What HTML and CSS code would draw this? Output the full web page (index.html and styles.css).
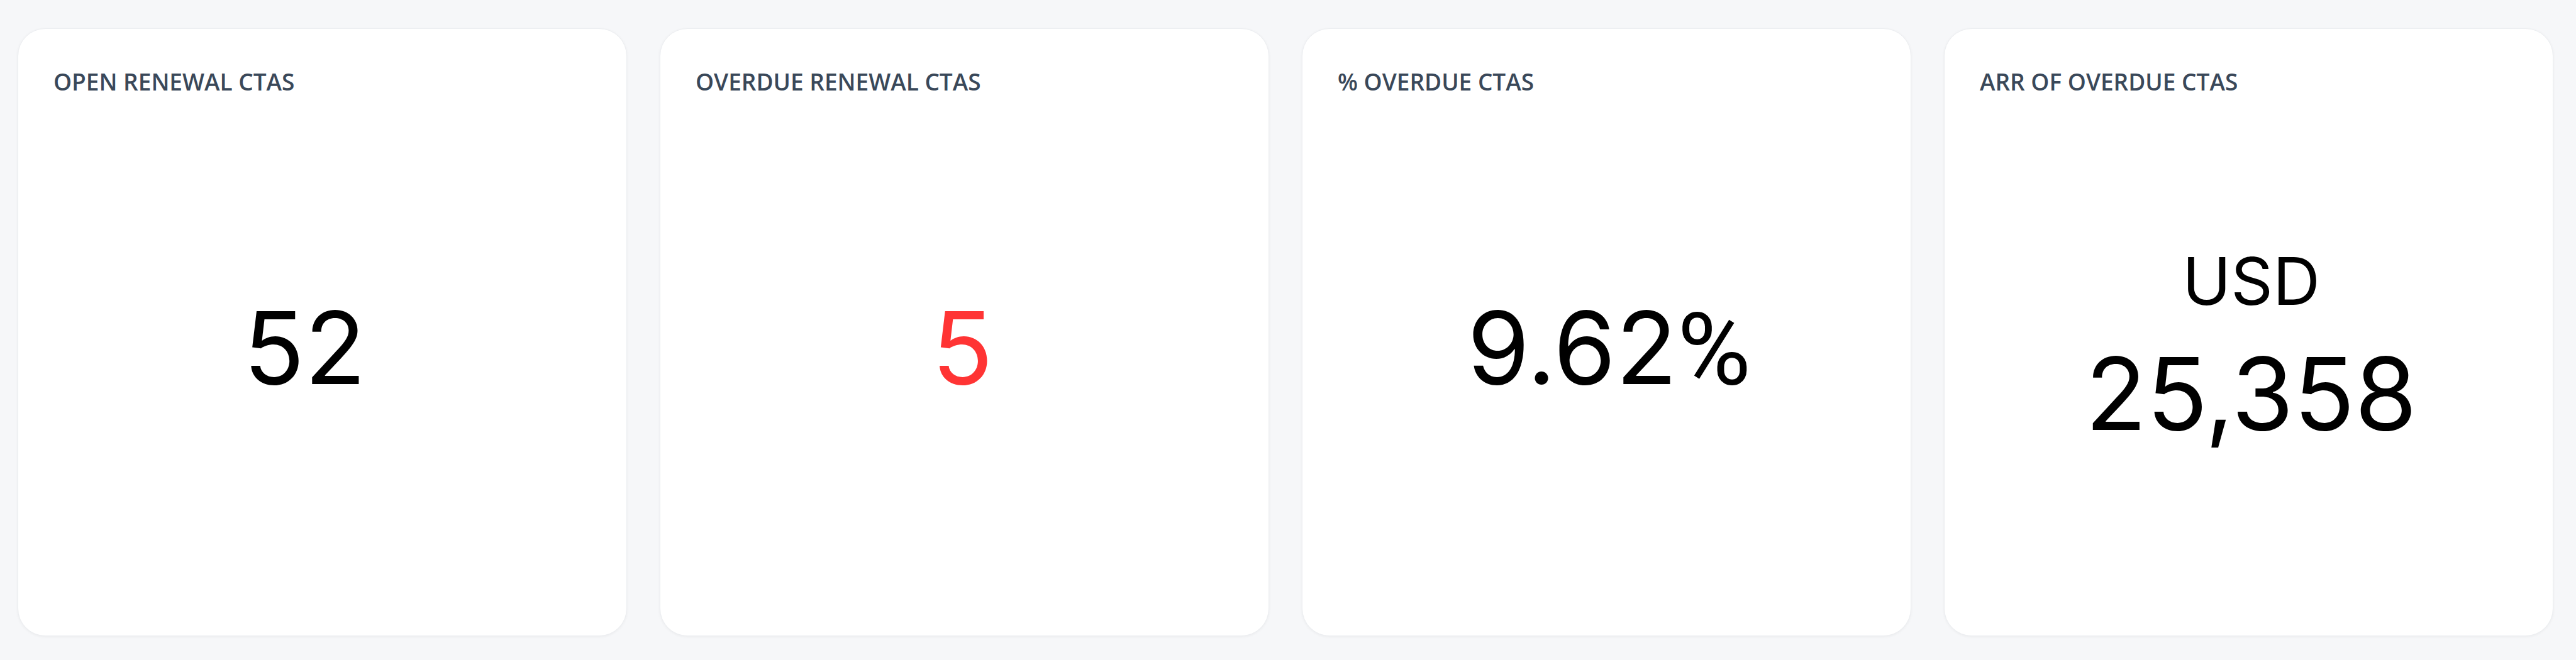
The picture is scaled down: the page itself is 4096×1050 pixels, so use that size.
FILE: index.html
```html
<!DOCTYPE html>
<html>
<head>
    <title>Renewal CTAs</title>
    <link rel="stylesheet" href="styles.css">
</head>
<body>
    <div id="kpi-row">
        <div class="kpi-card">
            <div class="kpi-label">OPEN RENEWAL CTAS</div>
            <div class="kpi-body offset-lg">
                <div class="kpi-value">52</div>
            </div>
        </div>
        <div class="kpi-card">
            <div class="kpi-label">OVERDUE RENEWAL CTAS</div>
            <div class="kpi-body offset-sm">
                <div class="kpi-value alert">5</div>
            </div>
        </div>
        <div class="kpi-card">
            <div class="kpi-label">% OVERDUE CTAS</div>
            <div class="kpi-body">
                <div class="kpi-value">9.62<span class="kpi-suffix">%</span></div>
            </div>
        </div>
        <div class="kpi-card">
            <div class="kpi-label">ARR OF OVERDUE CTAS</div>
            <div class="kpi-body">
                <div class="kpi-unit">USD</div>
                <div class="kpi-value">25,358</div>
            </div>
        </div>
    </div>
</body>
</html>
```

FILE: styles.css
```css
* { box-sizing: border-box; margin: 0; padding: 0; }
body {
    background: #f6f7f9;
    height: 100vh;
    padding: 45px 36px 38px 28px;
}
#kpi-row {
    height: 100%;
    display: grid;
    grid-template-columns: repeat(4, 1fr);
    gap: 52px;
}
.kpi-card {
    background: #fff;
    border: 1px solid #eceef1;
    border-radius: 44px;
    box-shadow: 0 1px 4px rgba(0,0,0,0.05);
    padding: 58px 48px 60px 56px;
    display: flex;
    flex-direction: column;
}
.kpi-label {
    font-family: 'Open Sans', 'Noto Sans', sans-serif;
    font-size: 37px;
    font-weight: 600;
    color: #3a4859;
}
.kpi-body {
    flex: 1;
    display: flex;
    flex-direction: column;
    align-items: center;
    justify-content: center;
    font-family: Inter, 'Liberation Sans', sans-serif;
    color: #000;
}
.kpi-body.offset-lg {
    padding-right: 64px;
}
.kpi-body.offset-sm {
    padding-right: 14px;
}
.kpi-value {
    font-size: 160px;
    font-weight: 400;
}
.kpi-value.alert {
    color: #ff3434;
}
.kpi-suffix {
    font-family: Roboto, Inter, sans-serif;
}
.kpi-unit {
    font-size: 104px;
    margin-bottom: 19px;
}
```
